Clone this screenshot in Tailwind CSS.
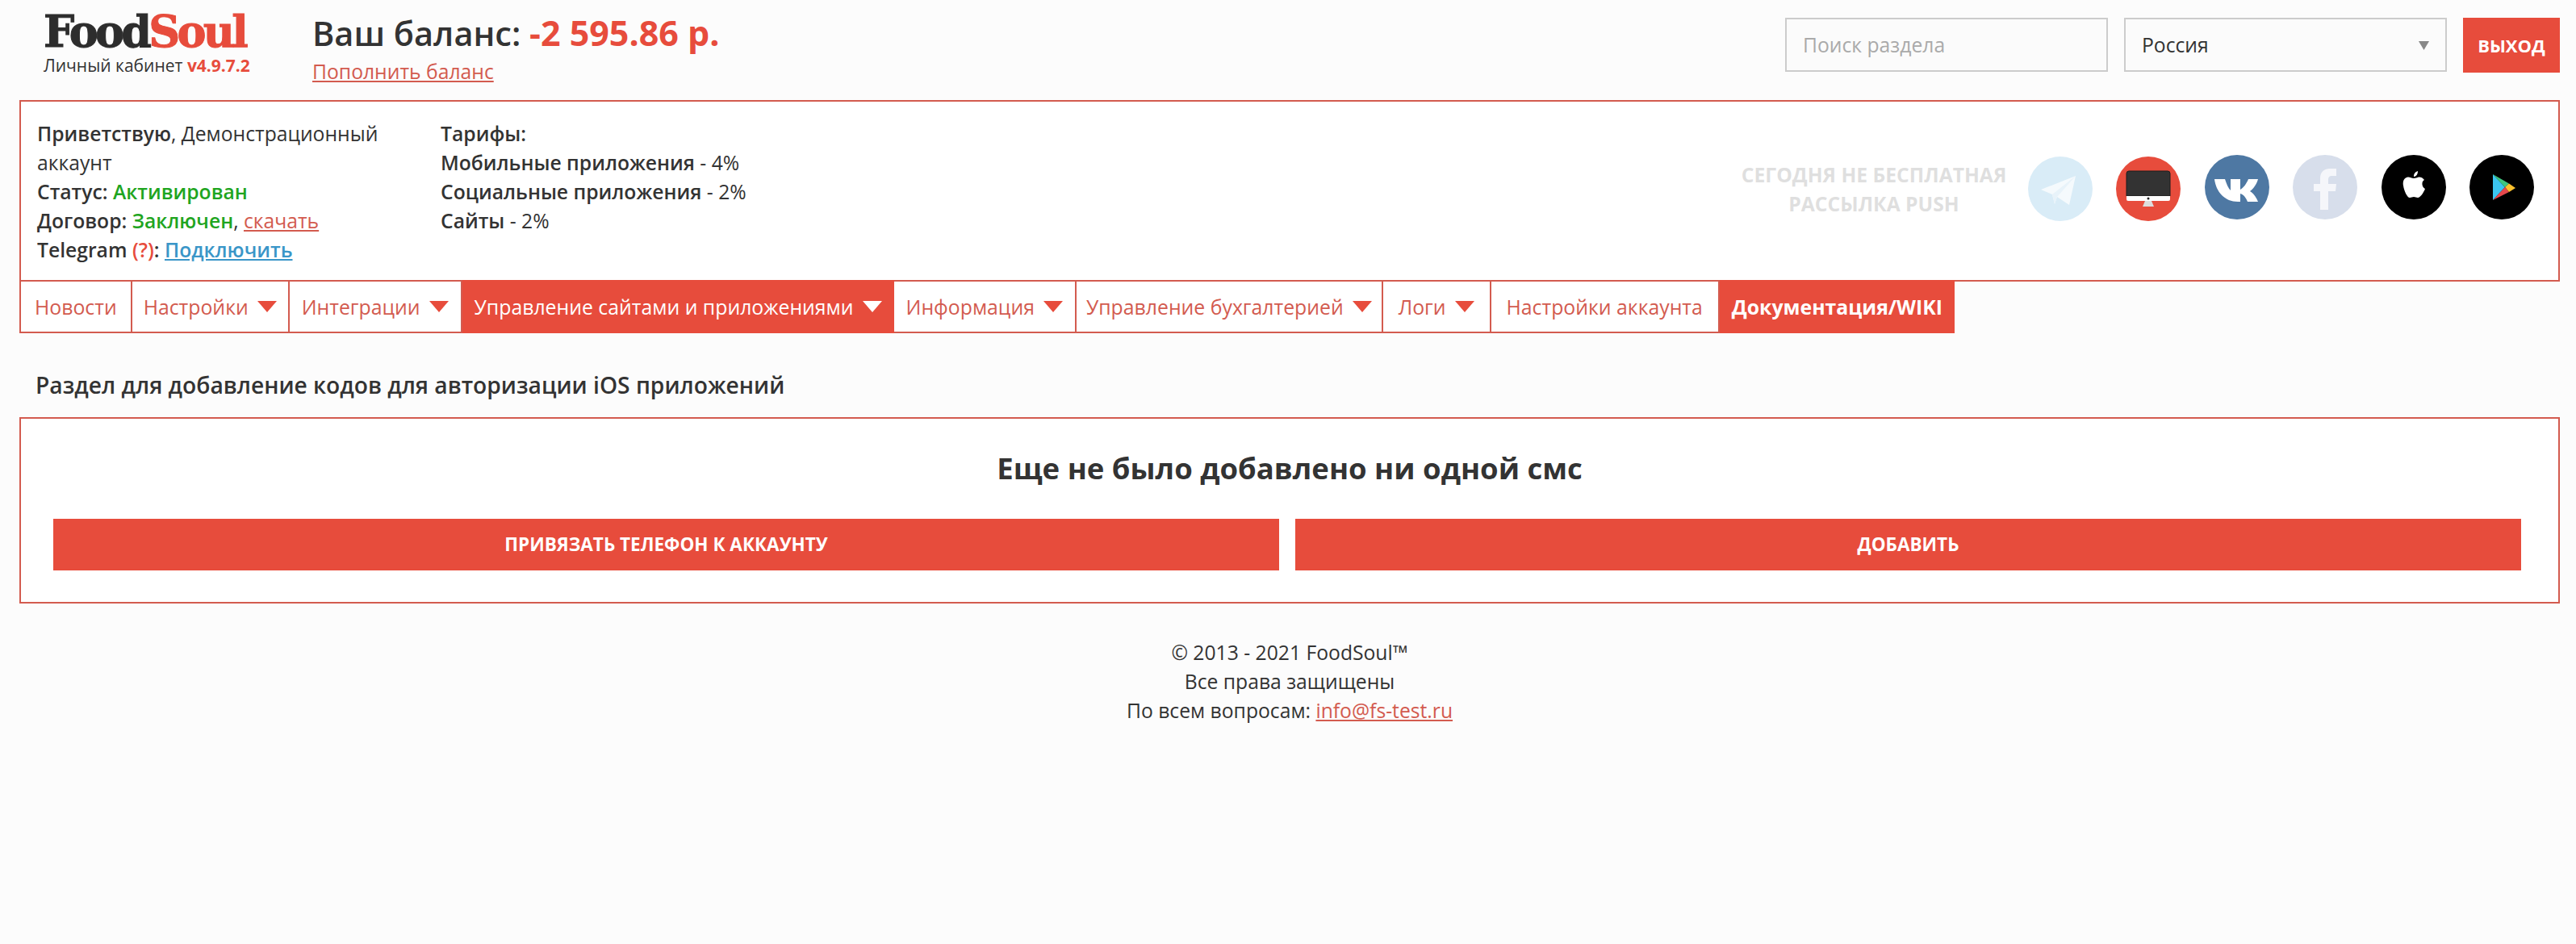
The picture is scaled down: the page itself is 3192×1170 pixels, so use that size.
<!DOCTYPE html>
<html lang="ru">
<head>
    <meta charset="UTF-8">
    <meta name="viewport" content="width=device-width, initial-scale=1.0">
    <title>FoodSoul - Личный кабинет</title>
    <script src="https://cdn.jsdelivr.net/npm/@tailwindcss/browser@4"></script>
</head>
<body class="bg-[#fcfcfc] text-[#333] font-['Open_Sans',sans-serif] text-[24.7px] leading-[36px] min-h-screen">
    <div class="pl-[24px] pr-[20px]">
        <!-- Шапка -->
        <header class="flex items-start h-[124px]">
            <div class="w-[251px] ml-[30px] mt-[11px] shrink-0">
                <div class="font-['DejaVu_Serif',serif] font-bold text-[54px] leading-[56px] tracking-[-3.75px] [-webkit-text-stroke:1px_currentColor] whitespace-nowrap text-[#2d2d2d]">Food<span class="text-[#e74c3c]">Soul</span></div>
                <div class="text-[21px] leading-[24px] mt-[2px] whitespace-nowrap">Личный кабинет <b class="text-[#e74c3c]">v4.9.7.2</b></div>
            </div>
            <div class="ml-[82px] mt-[19px]">
                <div class="text-[41.5px] leading-[44px] font-semibold whitespace-nowrap">Ваш баланс: <span class="text-[43px] font-bold text-[#e74c3c]">-2 595.86 р.</span></div>
                <a href="#" class="block mt-[8px] text-[#d35b4f] underline">Пополнить баланс</a>
            </div>
            <div class="ml-auto mt-[22px] flex gap-[20px]">
                <input type="text" placeholder="Поиск раздела" class="w-[400px] h-[67px] px-[20px] border-2 border-[#ccc] bg-[#fbfbfb] placeholder:text-[#aaa] outline-none">
                <div class="relative">
                    <select class="w-[400px] h-[67px] px-[20px] border-2 border-[#ccc] bg-[#fbfbfb] appearance-none outline-none">
                        <option>Россия</option>
                    </select>
                    <svg class="absolute right-[22px] top-[29px] w-[13px] h-[11px]" viewBox="0 0 13 11"><path d="M0 0h13L6.500 11z" fill="#888"/></svg>
                </div>
                <button class="w-[120px] h-[68px] bg-[#e74c3c] text-white font-bold text-[22px]">ВЫХОД</button>
            </div>
        </header>

        <!-- Инфо-панель -->
        <section class="flex items-start h-[225px] bg-white border-2 border-[#d35b4f] pl-[20px] pt-[22px]">
            <div class="w-[480px] shrink-0">
                <div><b class="font-semibold">Приветствую</b>, Демонстрационный аккаунт</div>
                <div><b class="font-semibold">Статус:</b> <b class="font-semibold text-[#1fa51f]">Активирован</b></div>
                <div><b class="font-semibold">Договор:</b> <b class="font-semibold text-[#1fa51f]">Заключен</b>, <a href="#" class="text-[#d35b4f] underline">скачать</a></div>
                <div><b class="font-semibold">Telegram</b> <b class="font-semibold text-[#e74c3c]">(?)</b><b class="font-semibold">:</b> <a href="#" class="font-semibold text-[#3a96c8] underline">Подключить</a></div>
            </div>
            <div class="ml-[20px] whitespace-nowrap">
                <div class="font-semibold">Тарифы:</div>
                <div><b class="font-semibold">Мобильные приложения</b> - 4%</div>
                <div><b class="font-semibold">Социальные приложения</b> - 2%</div>
                <div><b class="font-semibold">Сайты</b> - 2%</div>
            </div>
            <div class="ml-auto mt-[44px] mr-[30px] flex items-start">
                <div class="w-[340px] mt-[7px] mr-[21px] text-center font-bold text-[#dfdfdf] whitespace-nowrap">СЕГОДНЯ НЕ БЕСПЛАТНАЯ<br>РАССЫЛКА PUSH</div>
                <div class="flex gap-[29.4px]">
                    <!-- Telegram -->
                    <svg class="w-[80px] h-[80px] mt-[2px]" viewBox="0 0 80 80"><circle cx="40" cy="40" r="40" fill="#d9ecf7"/><path d="M16 41 59 24 51 60 36 50 33 59 30 47z" fill="#f5fafd"/><path d="M30 47 59 24 36 50 33 59z" fill="#e8f3fa"/></svg>
                    <!-- Mac -->
                    <svg class="w-[80px] h-[80px] mt-[2px]" viewBox="0 0 80 80"><circle cx="40" cy="40" r="40" fill="#e74c3c"/><path d="M13 21a3 3 0 0 1 3-3h48a3 3 0 0 1 3 3v28H13z" fill="#333" stroke="#1c1c1c" stroke-width="1"/><path d="M13 49h54v4a2 2 0 0 1-2 2H15a2 2 0 0 1-2-2z" fill="#fff"/><path d="M36 55h8l3 7H33z" fill="#ddd"/><circle cx="40" cy="52" r="1.500" fill="#222"/></svg>
                    <!-- VK -->
                    <svg class="w-[80px] h-[80px]" viewBox="0 0 80 80"><circle cx="40" cy="40" r="40" fill="#4e78a3"/><path d="M12 30H25C27 36 29 41 32 44V30H44V43C48 41 52 35 54 30H66C64 37 60 42 56 45 60 47 64 53 66 58H53C51 53 48 49 44 48V58H41C25 58 14 46 12 30z" fill="#fff"/></svg>
                    <!-- Facebook -->
                    <svg class="w-[80px] h-[80px]" viewBox="0 0 80 80"><circle cx="40" cy="40" r="40" fill="#d7deeb"/><path d="M34 68V45H26V36H34V29C34 21 39 17 46 17H54V26H49C45 26 44 28 44 31V36H54L53 45H44V68z" fill="#f5f6fa"/></svg>
                    <!-- Apple -->
                    <svg class="w-[80px] h-[80px]" viewBox="0 0 80 80"><circle cx="40" cy="40" r="40" fill="#000"/><path d="M40 29C37 29 35 27 32.500 27.500 28 28 26 33 27 38 28 45 32 53 35 53 37 53 38 52 40 52 42 52 43 53 45 53 48 53 52 47 54 42 50 40 49 33 53 31 51 28 48 27 46 27.500 44 28 42 29 40 29zM40 27C40 23 42 21 45 20 45 24 43 27 40 27z" fill="#fff"/></svg>
                    <!-- Google Play -->
                    <svg class="w-[80px] h-[80px]" viewBox="0 0 80 80"><circle cx="40" cy="40" r="40" fill="#000"/><path d="M29 24 44 40 29 56z" fill="#3bc5f0"/><path d="M29 24 49 35.500 44 40z" fill="#3fc67f"/><path d="M49 35.500 57 41 49 46 44 40z" fill="#fbc02d"/><path d="M29 56 44 40 49 46z" fill="#e5484d"/></svg>
                </div>
            </div>
        </section>

        <!-- Меню -->
        <nav class="flex -mt-[2px] h-[66px] text-[24.8px] text-[#d35b4f] whitespace-nowrap">
            <a href="#" class="flex items-center border-2 border-[#d35b4f] bg-white px-[17px]">Новости</a>
            <a href="#" class="flex items-center gap-[11px] border-2 border-l-0 border-[#d35b4f] bg-white px-[14px]">Настройки <svg class="w-[24px] h-[14px]" viewBox="0 0 24 14"><path d="M0 0h24L12 14z" fill="#e74c3c"/></svg></a>
            <a href="#" class="flex items-center gap-[11px] border-2 border-l-0 border-[#d35b4f] bg-white px-[15px]">Интеграции <svg class="w-[24px] h-[14px]" viewBox="0 0 24 14"><path d="M0 0h24L12 14z" fill="#e74c3c"/></svg></a>
            <a href="#" class="flex items-center gap-[11px] bg-[#e74c3c] text-white px-[15px]">Управление сайтами и приложениями <svg class="w-[24px] h-[14px]" viewBox="0 0 24 14"><path d="M0 0h24L12 14z" fill="#fff"/></svg></a>
            <a href="#" class="flex items-center gap-[11px] border-2 border-l-0 border-[#d35b4f] bg-white px-[15px]">Информация <svg class="w-[24px] h-[14px]" viewBox="0 0 24 14"><path d="M0 0h24L12 14z" fill="#e74c3c"/></svg></a>
            <a href="#" class="flex items-center gap-[11px] border-2 border-l-0 border-[#d35b4f] bg-white px-[12px]">Управление бухгалтерией <svg class="w-[24px] h-[14px]" viewBox="0 0 24 14"><path d="M0 0h24L12 14z" fill="#e74c3c"/></svg></a>
            <a href="#" class="flex items-center gap-[11px] border-2 border-l-0 border-[#d35b4f] bg-white px-[19px]">Логи <svg class="w-[24px] h-[14px]" viewBox="0 0 24 14"><path d="M0 0h24L12 14z" fill="#e74c3c"/></svg></a>
            <a href="#" class="flex items-center border-2 border-l-0 border-[#d35b4f] bg-white px-[19px]">Настройки аккаунта</a>
            <a href="#" class="flex items-center bg-[#e74c3c] text-white font-bold px-[15px]">Документация/WIKI</a>
        </nav>

        <!-- Контент -->
        <h1 class="ml-[20px] mt-[46px] text-[28.2px] leading-[36px] font-semibold">Раздел для добавление кодов для авторизации iOS приложений</h1>
        <section class="mt-[22px] h-[231px] bg-white border-2 border-[#d35b4f] pl-[40px] pr-[46px] pt-[36px]">
            <h2 class="text-center text-[36.5px] leading-[50px] font-bold pl-[6px]">Еще не было добавлено ни одной смс</h2>
            <div class="flex gap-[20px] mt-[38px]">
                <button class="flex-1 h-[64px] bg-[#e74c3c] text-white font-bold text-[22.5px]">ПРИВЯЗАТЬ ТЕЛЕФОН К АККАУНТУ</button>
                <button class="flex-1 h-[64px] bg-[#e74c3c] text-white font-bold text-[22.5px]">ДОБАВИТЬ</button>
            </div>
        </section>

        <!-- Подвал -->
        <footer class="mt-[43px] text-center">
            <div>© 2013 - 2021 FoodSoul™</div>
            <div>Все права защищены</div>
            <div>По всем вопросам: <a href="#" class="text-[#d35b4f] underline">info@fs-test.ru</a></div>
        </footer>
    </div>
</body>
</html>
